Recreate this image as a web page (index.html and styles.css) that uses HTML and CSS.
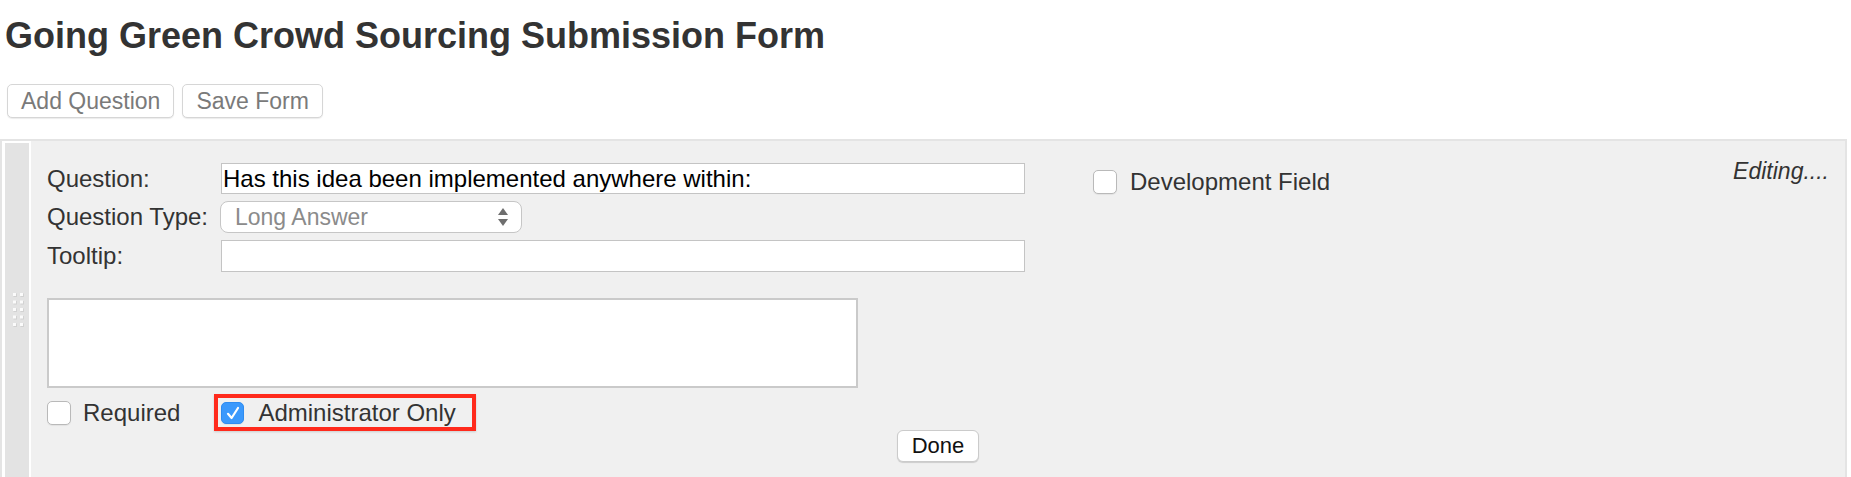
FILE: index.html
```html
<!DOCTYPE html>
<html lang="en">
<head>
<meta charset="utf-8">
<title>Going Green Crowd Sourcing Submission Form</title>
<link rel="stylesheet" href="styles.css">
</head>
<body>
<h1 class="title">Going Green Crowd Sourcing Submission Form</h1>
<div class="toolbar">
  <button class="tool-btn" type="button">Add Question</button>
  <button class="tool-btn" type="button">Save Form</button>
</div>
<div class="panel">
  <div class="handle">
    <svg class="grip" width="24" height="36" viewBox="0 0 24 36" aria-hidden="true">
      <g fill="#d2d2d2">
        <rect x="8.5" y="0.5" width="3.5" height="3.5"/><rect x="15.5" y="0.5" width="3.5" height="3.5"/>
        <rect x="8.5" y="8" width="3.5" height="3.5"/><rect x="15.5" y="8" width="3.5" height="3.5"/>
        <rect x="8.5" y="15.5" width="3.5" height="3.5"/><rect x="15.5" y="15.5" width="3.5" height="3.5"/>
        <rect x="8.5" y="23" width="3.5" height="3.5"/><rect x="15.5" y="23" width="3.5" height="3.5"/>
        <rect x="8.5" y="30.5" width="3.5" height="3.5"/><rect x="15.5" y="30.5" width="3.5" height="3.5"/>
      </g>
      <g fill="#fbfbfb">
        <rect x="8" y="0" width="3" height="3"/><rect x="15" y="0" width="3" height="3"/>
        <rect x="8" y="7.5" width="3" height="3"/><rect x="15" y="7.5" width="3" height="3"/>
        <rect x="8" y="15" width="3" height="3"/><rect x="15" y="15" width="3" height="3"/>
        <rect x="8" y="22.5" width="3" height="3"/><rect x="15" y="22.5" width="3" height="3"/>
        <rect x="8" y="30" width="3" height="3"/><rect x="15" y="30" width="3" height="3"/>
      </g>
    </svg>
  </div>
  <div class="editor">
    <div class="top-row">
      <div class="fields">
        <span class="field-label">Question:</span>
        <div class="text-input">Has this idea been implemented anywhere within:</div>
        <span class="field-label">Question Type:</span>
        <div class="select">
          <span class="select-value">Long Answer</span>
          <svg class="select-arrows" width="10" height="19" viewBox="0 0 10 19" aria-hidden="true">
            <path d="M5 0 L10 7 L0 7 Z" fill="#6e6e6e"/>
            <path d="M0 11 L10 11 L5 18 Z" fill="#6e6e6e"/>
          </svg>
        </div>
        <span class="field-label">Tooltip:</span>
        <div class="text-input"></div>
      </div>
      <div class="check dev-check">
        <span class="box"></span>
        <span class="check-text">Development Field</span>
      </div>
      <div class="status">Editing....</div>
    </div>
    <div class="textarea"></div>
    <div class="checks">
      <div class="check">
        <span class="box"></span>
        <span class="check-text">Required</span>
      </div>
      <div class="highlight">
        <div class="check">
          <span class="box box-checked">
            <svg width="18" height="18" viewBox="0 0 18 18" aria-hidden="true">
              <path d="M4 9.8 L7.6 14 L14 4" fill="none" stroke="#ffffff" stroke-width="2.2" stroke-linecap="round" stroke-linejoin="round"/>
            </svg>
          </span>
          <span class="check-text">Administrator Only</span>
        </div>
      </div>
    </div>
    <div class="done-row">
      <button class="done-btn" type="button">Done</button>
    </div>
  </div>
</div>
</body>
</html>
```
FILE: styles.css
```css
html, body {
  margin: 0;
  padding: 0;
  background: #ffffff;
}

body {
  font-family: "Liberation Sans", Arial, Helvetica, sans-serif;
  color: #333333;
}

.title {
  margin: 0;
  padding: 15px 0 0 5px;
  font-size: 36px;
  font-weight: bold;
  line-height: 41px;
  color: #333333;
}

.toolbar {
  display: flex;
  gap: 8px;
  margin: 28px 0 0 7px;
}

.tool-btn {
  height: 34px;
  padding: 0 13px;
  background: #ffffff;
  border: 1px solid #d6d6d6;
  border-radius: 5px;
  box-shadow: 0 1px 1px rgba(0, 0, 0, 0.08);
  font-family: "Liberation Sans", Arial, Helvetica, sans-serif;
  font-size: 23px;
  color: #7a7a7a;
}

.panel {
  display: flex;
  margin: 21px 4px 0 0;
  background: #f0f0f0;
  border: 2px solid #e4e4e4;
}

.handle {
  display: flex;
  align-items: center;
  width: 24px;
  background: #e3e3e3;
  border-left: 3px solid #ffffff;
  border-right: 2px solid #ffffff;
  border-top: 2px solid #ffffff;
}

.grip {
  display: block;
}

.editor {
  flex: 1;
  padding: 17px 16px 16px 16px;
}

.top-row {
  display: flex;
  align-items: flex-start;
}

.fields {
  display: grid;
  grid-template-columns: 174px 804px;
  grid-template-rows: 31px 32px 32px;
  row-gap: 7px;
  align-items: center;
  margin-top: 5px;
}

.field-label {
  font-size: 24px;
  color: #333333;
}

.text-input {
  box-sizing: border-box;
  height: 100%;
  padding: 0 1px;
  display: flex;
  align-items: center;
  background: #ffffff;
  border: 1px solid #c4c4c4;
  font-size: 24px;
  color: #000000;
  white-space: nowrap;
}

.select {
  box-sizing: border-box;
  display: flex;
  align-items: center;
  justify-content: space-between;
  width: 302px;
  height: 32px;
  margin-left: -1px;
  padding: 0 13px 0 14px;
  background: #ffffff;
  border: 1px solid #c6c6c6;
  border-radius: 8px;
}

.select-value {
  font-size: 23px;
  color: #8b8b8b;
}

.select-arrows {
  display: block;
}

.check {
  display: flex;
  align-items: center;
  gap: 12px;
}

.box {
  box-sizing: border-box;
  display: flex;
  align-items: center;
  justify-content: center;
  width: 24px;
  height: 24px;
  background: #ffffff;
  border: 1px solid #b9b9b9;
  border-radius: 5px;
  box-shadow: 0 1px 1px rgba(0, 0, 0, 0.06);
}

.check-text {
  font-size: 24px;
  color: #333333;
}

.dev-check {
  margin: 10px 0 0 68px;
  gap: 13px;
}

.status {
  margin-left: auto;
  font-size: 23px;
  font-style: italic;
  color: #333333;
}

.textarea {
  box-sizing: border-box;
  width: 811px;
  height: 90px;
  margin-top: 26px;
  background: #ffffff;
  border: 2px solid #cacaca;
}

.checks {
  display: flex;
  align-items: center;
  height: 37px;
  margin-top: 6px;
}

.highlight {
  box-sizing: border-box;
  display: flex;
  align-items: center;
  height: 37px;
  margin-left: 34px;
  padding: 0 16px 0 3px;
  border: 4px solid #ff2a1c;
  box-shadow: 0 1px 2px rgba(0, 0, 0, 0.15);
}

.highlight .check {
  gap: 14px;
}

.box-checked {
  width: 23px;
  height: 22px;
  background: #3b99fc;
  border: 1px solid #2f8cf0;
}

.done-row {
  display: flex;
  justify-content: center;
  margin-top: -1px;
}

.done-btn {
  height: 32px;
  padding: 0 14px;
  background: #ffffff;
  border: 1px solid #cbcbcb;
  border-radius: 6px;
  box-shadow: 0 1px 1px rgba(0, 0, 0, 0.15);
  font-family: "Liberation Sans", Arial, Helvetica, sans-serif;
  font-size: 22px;
  color: #111111;
}
```
